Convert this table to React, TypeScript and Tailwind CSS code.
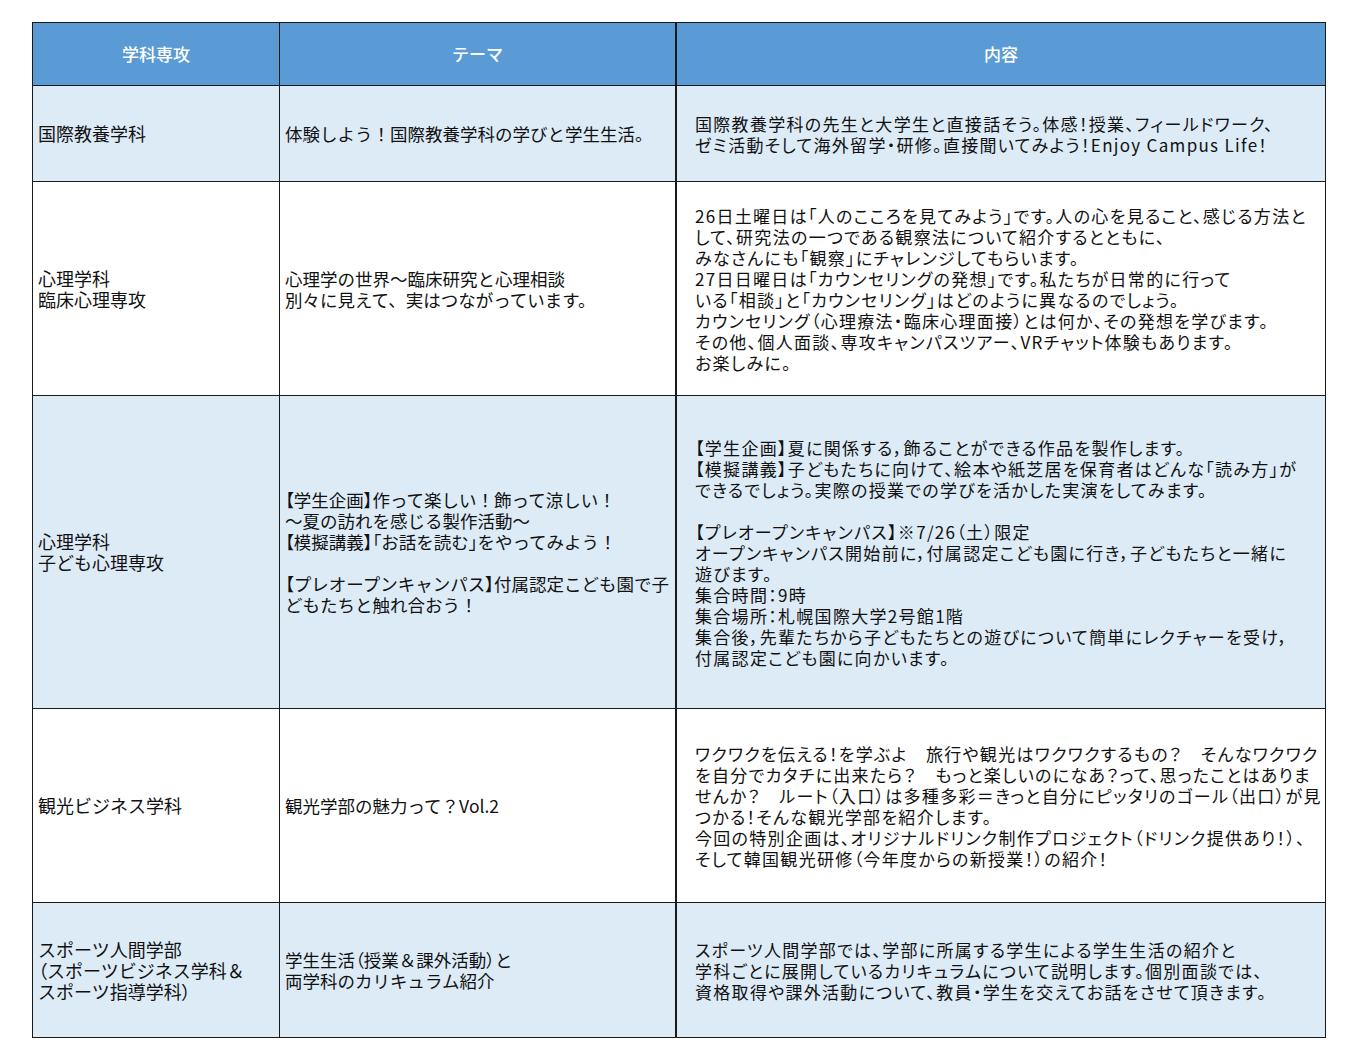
import React from "react";

const F = { fontFamily: '"Noto Sans CJK JP", "Noto Sans", sans-serif' };

type Row = { a: string[]; b: string[]; c: string[]; bg: string; h: string };

const rows: Row[] = [
  {
    a: ["国際教養学科"],
    b: ["体験しよう！国際教養学科の学びと学生生活。"],
    c: [
      "国際教養学科の先生と大学生と直接話そう。体感！授業、フィールドワーク、",
      "ゼミ活動そして海外留学・研修。直接聞いてみよう！Enjoy Campus Life！",
    ],
    bg: "bg-[#ddebf7]",
    h: "h-[96px]",
  },
  {
    a: ["心理学科", "臨床心理専攻"],
    b: ["心理学の世界～臨床研究と心理相談", "別々に見えて、実はつながっています。"],
    c: [
      "26日土曜日は「人のこころを見てみよう」です。人の心を見ること、感じる方法と",
      "して、研究法の一つである観察法について紹介するとともに、",
      "みなさんにも「観察」にチャレンジしてもらいます。",
      "27日日曜日は「カウンセリングの発想」です。私たちが日常的に行って",
      "いる「相談」と「カウンセリング」はどのように異なるのでしょう。",
      "カウンセリング（心理療法・臨床心理面接）とは何か、その発想を学びます。",
      "その他、個人面談、専攻キャンパスツアー、VRチャット体験もあります。",
      "お楽しみに。",
    ],
    bg: "bg-white",
    h: "h-[214px]",
  },
  {
    a: ["心理学科", "子ども心理専攻"],
    b: [
      "【学生企画】作って楽しい！飾って涼しい！",
      "～夏の訪れを感じる製作活動～",
      "【模擬講義】「お話を読む」をやってみよう！",
      "",
      "【プレオープンキャンパス】付属認定こども園で子",
      "どもたちと触れ合おう！",
    ],
    c: [
      "【学生企画】夏に関係する，飾ることができる作品を製作します。",
      "【模擬講義】子どもたちに向けて、絵本や紙芝居を保育者はどんな「読み方」が",
      "できるでしょう。実際の授業での学びを活かした実演をしてみます。",
      "",
      "【プレオープンキャンパス】※7/26（土）限定",
      "オープンキャンパス開始前に，付属認定こども園に行き，子どもたちと一緒に",
      "遊びます。",
      "集合時間：9時",
      "集合場所：札幌国際大学2号館1階",
      "集合後，先輩たちから子どもたちとの遊びについて簡単にレクチャーを受け，",
      "付属認定こども園に向かいます。",
    ],
    bg: "bg-[#ddebf7]",
    h: "h-[313px]",
  },
  {
    a: ["観光ビジネス学科"],
    b: ["観光学部の魅力って？Vol.2"],
    c: [
      "ワクワクを伝える！を学ぶよ　旅行や観光はワクワクするもの？　そんなワクワク",
      "を自分でカタチに出来たら？　もっと楽しいのになあ？って、思ったことはありま",
      "せんか？　ルート（入口）は多種多彩＝きっと自分にピッタリのゴール（出口）が見",
      "つかる！そんな観光学部を紹介します。",
      "今回の特別企画は、オリジナルドリンク制作プロジェクト（ドリンク提供あり！）、",
      "そして韓国観光研修（今年度からの新授業！）の紹介！",
    ],
    bg: "bg-white",
    h: "h-[194px]",
  },
  {
    a: ["スポーツ人間学部", "（スポーツビジネス学科＆", "スポーツ指導学科）"],
    b: ["学生生活（授業＆課外活動）と", "両学科のカリキュラム紹介"],
    c: [
      "スポーツ人間学部では、学部に所属する学生による学生生活の紹介と",
      "学科ごとに展開しているカリキュラムについて説明します。個別面談では、",
      "資格取得や課外活動について、教員・学生を交えてお話をさせて頂きます。",
    ],
    bg: "bg-[#ddebf7]",
    h: "h-[135px]",
  },
];

const PALT = { fontFeatureSettings: '"palt"' };
const BRACKETS = /([【】「」（）])/;

function Narrow({ text }: { text: string }) {
  const parts = text.split(BRACKETS);
  return (
    <>
      {parts.map((p, i) =>
        BRACKETS.test(p) ? (
          <span key={i} style={PALT}>
            {p}
          </span>
        ) : (
          <React.Fragment key={i}>{p}</React.Fragment>
        )
      )}
    </>
  );
}

function Lines({ lines, kind }: { lines: string[]; kind: "a" | "b" | "c" }) {
  const size =
    kind === "a"
      ? "text-[18px]"
      : kind === "b"
      ? "text-[17.5px]"
      : "text-[17px] tracking-[1.3px]";
  return (
    <div
      className={`whitespace-pre leading-[21px] text-[#111] ${size}`}
      style={kind === "c" ? PALT : undefined}
    >
      {lines.map((l, i) => (
        <div key={i} className="h-[21px]">
          {kind === "c" ? l : <Narrow text={l} />}
        </div>
      ))}
    </div>
  );
}

export default function App() {
  return (
    <div className="min-h-[1061px] bg-white pt-[22px] pl-[32px]" style={F}>
      <div className="grid w-[1294px] grid-cols-[247px_397px_649px] border-l border-t border-[#1a1a1a]">
        <div className="flex h-[63px] items-center justify-center border-b border-r border-[#1a1a1a] bg-[#5b9bd5] text-[17px] font-medium text-white">
          学科専攻
        </div>
        <div className="flex h-[63px] items-center justify-center border-b border-r-2 border-[#1a1a1a] bg-[#5b9bd5] text-[17px] font-medium text-white">
          テーマ
        </div>
        <div className="flex h-[63px] items-center justify-center border-b border-r border-[#1a1a1a] bg-[#5b9bd5] text-[17px] font-medium text-white">
          内容
        </div>
        {rows.map((r, i) => (
          <React.Fragment key={i}>
            <div className={`flex items-center border-b border-r border-[#1a1a1a] pl-[5px] ${r.bg} ${r.h}`}>
              <Lines lines={r.a} kind="a" />
            </div>
            <div className={`flex items-center overflow-hidden border-b border-r-2 border-[#1a1a1a] pl-[5px] ${r.bg} ${r.h}`}>
              <Lines lines={r.b} kind="b" />
            </div>
            <div className={`flex items-center overflow-hidden border-b border-r border-[#1a1a1a] pl-[18px] ${r.bg} ${r.h}`}>
              <Lines lines={r.c} kind="c" />
            </div>
          </React.Fragment>
        ))}
      </div>
    </div>
  );
}
